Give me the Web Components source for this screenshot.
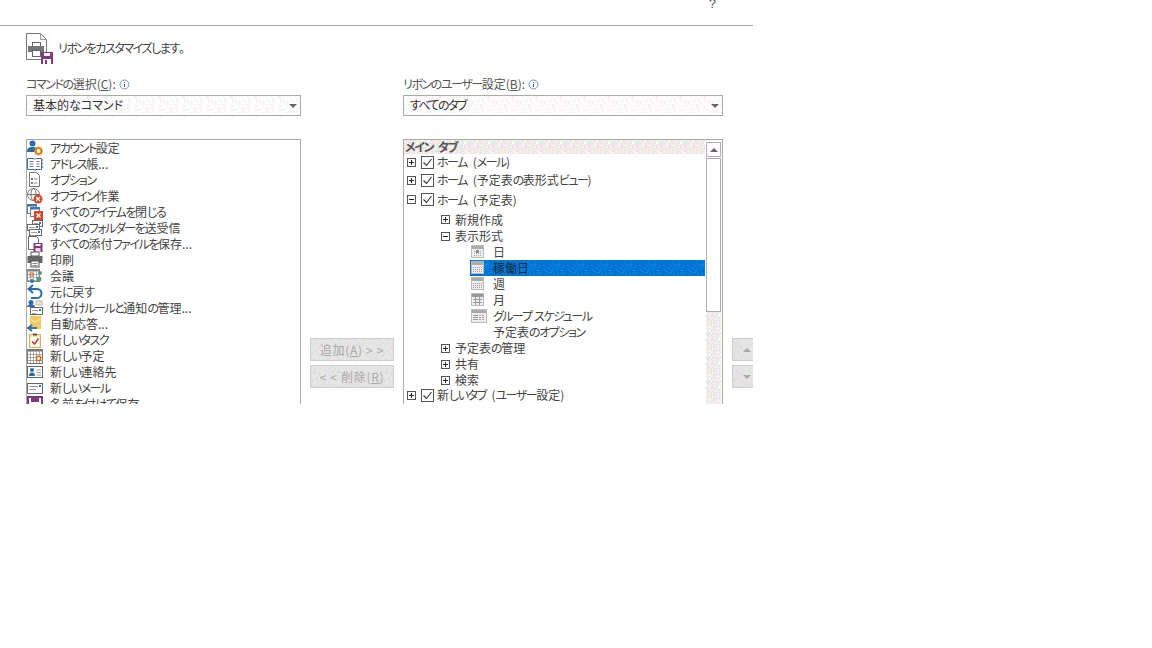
<!DOCTYPE html>
<html lang="ja"><head><meta charset="utf-8"><title>リボンのカスタマイズ</title>
<style>
html,body{margin:0;background:#fff}
body{font:12px/16px "Noto Sans CJK JP","Noto Sans",sans-serif;color:#444;font-feature-settings:"palt"}
</style></head><body>
<x-dialog>
  <x-caption slot="caption"></x-caption>
  <x-heading slot="heading">リボンをカスタマイズします。</x-heading>

  <x-field slot="left" style="--w:275px" value="基本的なコマンド" ls="0"><span>コマンドの選択(<u>C</u>):</span></x-field>
  <x-list slot="left" style="--w:275px">
    <x-cmd icon="account">アカウント設定</x-cmd>
    <x-cmd icon="book">アドレス帳...</x-cmd>
    <x-cmd icon="option">オプション</x-cmd>
    <x-cmd icon="offline">オフライン作業</x-cmd>
    <x-cmd icon="closeall">すべてのアイテムを閉じる</x-cmd>
    <x-cmd icon="sendall">すべてのフォルダーを送受信</x-cmd>
    <x-cmd icon="saveatt">すべての添付ファイルを保存...</x-cmd>
    <x-cmd icon="print">印刷</x-cmd>
    <x-cmd icon="meeting">会議</x-cmd>
    <x-cmd icon="undo">元に戻す</x-cmd>
    <x-cmd icon="rules">仕分けルールと通知の管理...</x-cmd>
    <x-cmd icon="auto">自動応答...</x-cmd>
    <x-cmd icon="task">新しいタスク</x-cmd>
    <x-cmd icon="appt">新しい予定</x-cmd>
    <x-cmd icon="contact">新しい連絡先</x-cmd>
    <x-cmd icon="mail">新しいメール</x-cmd>
    <x-cmd icon="saveas">名前を付けて保存</x-cmd>
  </x-list>

  <x-btn slot="mid" style="--w:84px">追加(<u>A</u>) &gt; &gt;</x-btn>
  <x-btn slot="mid" style="--w:84px">&lt; &lt; 削除(<u>R</u>)</x-btn>

  <x-field slot="right" style="--w:320px" value="すべてのタブ" ls="-1.6"><span>リボンのユーザー設定(<u>B</u>):</span></x-field>
  <x-tree slot="right" style="--w:320px" title-text="メイン タブ">
    <x-node kind="top" state="plus" h="16">ホーム (メール)</x-node>
    <x-node kind="top" state="plus" h="20">ホーム (予定表の表形式ビュー)</x-node>
    <x-node kind="top" state="minus" h="19">ホーム (予定表)</x-node>
    <x-node kind="group" state="plus" h="19" style="padding-top:2px;box-sizing:border-box">新規作成</x-node>
    <x-node kind="group" state="minus">表示形式</x-node>
    <x-node kind="leaf" icon="day">日</x-node>
    <x-node kind="leaf" icon="work" selected>稼働日</x-node>
    <x-node kind="leaf" icon="week">週</x-node>
    <x-node kind="leaf" icon="month">月</x-node>
    <x-node kind="leaf" icon="group">グループ スケジュール</x-node>
    <x-node kind="leaf">予定表のオプション</x-node>
    <x-node kind="group" state="plus">予定表の管理</x-node>
    <x-node kind="group" state="plus">共有</x-node>
    <x-node kind="group" state="plus">検索</x-node>
    <x-node kind="top" state="plus" style="margin-top:-1px">新しいタブ (ユーザー設定)</x-node>
  </x-tree>

  <x-btn slot="side" style="--w:21px" arrow="up"></x-btn>
  <x-btn slot="side" style="--w:21px" arrow="down"></x-btn>
</x-dialog>

<script>
/* Narrow kana runs to the compact width of the original UI font */
const KANA=/[\u3040-\u30ff]+/g;
const narrowHTML=(s,ls=-1.45)=>s.replace(KANA,m=>`<span style="letter-spacing:${ls}px">${m}</span>`);
function narrowLight(root){
  const w=document.createTreeWalker(root,NodeFilter.SHOW_TEXT);const list=[];
  while(w.nextNode())if(w.currentNode.nodeValue.trim())list.push(w.currentNode);
  for(const t of list){const tpl=document.createElement('template');
    tpl.innerHTML=narrowHTML(t.nodeValue.replace(/&/g,'&amp;').replace(/</g,'&lt;'));t.replaceWith(tpl.content);}
}
narrowLight(document.querySelector('x-dialog'));

/* Dither tiles: pixel noise drawn as an SVG pattern, no raster image */
function tile(colors,n,seedIn){let s='',seed=seedIn||12345;
  const rnd=()=>{seed^=seed<<13;seed^=seed>>>17;seed^=seed<<5;seed>>>=0;return seed;};
  for(let y=0;y<n;y++)for(let x=0;x<n;x++){
    s+=`<rect x='${x}' y='${y}' width='1' height='1' fill='${colors[rnd()%colors.length]}'/>`;}
  return `url("data:image/svg+xml,${encodeURIComponent(`<svg xmlns='http://www.w3.org/2000/svg' width='${n}' height='${n}' shape-rendering='crispEdges'>${s}</svg>`)}")`;}
const TRACK=tile(['#f8dcea','#f8dcea','#dff3e4','#f6f5d6','#dfeaf7','#ffffff','#eadff3','#f3efe6'],24);
const BTN=tile(['#e6d5e6','#d9e8de','#e8e8d4','#d8e1ec','#e8e8e8','#e2e2e2','#efe6ec'],24,777);
const BOX=tile(['#fff','#fff','#fff','#fdf0f6','#fff','#f0f9f2','#fff','#fbe9f2','#fff','#f3f9f3'],24,4242);
const SEL=tile(['#0078d7','#0078d7','#0069c4','#0a86e6','#0078d7','#0070cc'],24,99);
const dither=`background:${TRACK};`;
const btnDither=`background:${BTN};`;

const doc='<path d="M2.5.5h7l3 3v11h-10z" fill="#fff" stroke="#777"/>';
const floppy=(x,y)=>`<g transform="translate(${x},${y})"><rect width="9" height="9" fill="#80397b"/><rect x="2" y="1" width="5" height="2" fill="#fff"/><rect x="2" y="5" width="5" height="4" fill="#e8d8e8"/></g>`;
const envelope=(x,y,w,h)=>`<rect x="${x+.5}" y="${y+.5}" width="${w}" height="${h}" fill="#fff" stroke="#666"/><path d="M${x+2} ${y+3.5}h${w-6}M${x+2} ${y+6.5}h${w-8}" stroke="#999"/><rect x="${x+w-3}" y="${y+2}" width="2" height="2" fill="#2b79b8"/>`;
const redx=(cx,cy)=>`<circle cx="${cx}" cy="${cy}" r="4.5" fill="#d24726"/><path d="M${cx-2} ${cy-2}l4 4m0-4l-4 4" stroke="#fff" stroke-width="1.2"/>`;
const calGrid=(x,y,w,h,c)=>{let s=`<rect x="${x+.5}" y="${y+.5}" width="${w}" height="${h}" fill="#fff" stroke="${c}"/><rect x="${x}" y="${y}" width="${w+1}" height="2.5" fill="${c}"/>`;for(let i=x+3.5;i<x+w;i+=3)s+=`<path d="M${i} ${y+2}v${h-2}" stroke="${c}" stroke-opacity=".6"/>`;for(let j=y+5.5;j<y+h;j+=3)s+=`<path d="M${x} ${j}h${w}" stroke="${c}" stroke-opacity=".6"/>`;return s;};
const ICONS={
account:'<circle cx="5.5" cy="3.5" r="3" fill="#2b6ca8"/><path d="M0 12c0-4 2-5 5.500-5s4 1 4 2v3z" fill="#2b6ca8"/><circle cx="11.500" cy="11" r="3" fill="none" stroke="#e8811a" stroke-width="2.200"/><path d="M11.500 6.500v2M11.500 13.500v2M7 11h2M14 11h2M8.500 8l1.500 1.500M13 12.500l1.500 1.500M14.500 8L13 9.500M10 12.500L8.500 14" stroke="#e8811a" stroke-width="1.300"/>',
book:'<path d="M.5 2.500h6.500l1 1 1-1h5.500v11h-6l-.5 1-.5-1H.5z" fill="#fff" stroke="#3b6f9e"/><path d="M2.500 5.500h4M2.500 8h4M2.500 10.500h4M9.500 5.500h3M9.500 8h3M9.500 10.500h3" stroke="#777"/><path d="M15 3v2" stroke="#d2691e" stroke-width="1.500"/><path d="M15 6.500v2" stroke="#2b79b8" stroke-width="1.500"/><path d="M15 10v2" stroke="#4a8a4a" stroke-width="1.500"/>',
option:doc+'<rect x="4.500" y="6.500" width="1" height="1" stroke="#777"/><path d="M7 7h3.500" stroke="#888"/><rect x="4.500" y="10.500" width="1" height="1" stroke="#777"/><path d="M7 11h3.500" stroke="#888"/>',
offline:'<circle cx="6.500" cy="6.500" r="6" fill="#fff" stroke="#777"/><ellipse cx="6.500" cy="6.500" rx="2.500" ry="6" fill="none" stroke="#777"/><path d="M.5 6.500h12" stroke="#777"/>'+redx(11,11),
closeall:'<rect x=".5" y=".5" width="9" height="9" fill="#fff" stroke="#777"/><rect x=".5" y=".5" width="9" height="2" fill="#2b79b8"/><rect x="3.500" y="3.500" width="9" height="9" fill="#fff" stroke="#777"/><rect x="3.500" y="3.500" width="9" height="2" fill="#2b79b8"/><rect x="7" y="7" width="9" height="9" fill="#d24726"/><path d="M9.500 9.500l4 4m0-4l-4 4" stroke="#fff" stroke-width="1.300"/>',
sendall:envelope(5,0,10,6)+envelope(0,4,12,6)+envelope(2,9,12,6),
saveatt:'<path d="M1.500.5h8l2 2v11h-10z" fill="#fff" stroke="#666"/>'+floppy(6.500,7),
print:'<rect x="4" y="0" width="8" height="4" fill="#fff" stroke="#555"/><rect x=".5" y="4" width="15" height="7" fill="#666"/><rect x="4" y="9" width="8" height="6" fill="#fff" stroke="#555"/><path d="M5.500 11.500h5M5.500 13.500h5" stroke="#888"/>',
meeting:calGrid(0,1,12,12,'#888')+'<rect x="3" y="5" width="3" height="3" fill="none" stroke="#d2691e"/><circle cx="13" cy="5" r="2" fill="#5d9a7c"/><circle cx="12" cy="11" r="2.500" fill="#5d9a7c"/><circle cx="5" cy="13" r="2" fill="#2b79b8"/>',
undo:'<path d="M6 1L1.500 5 6 9" fill="none" stroke="#2b6ca8" stroke-width="2"/><path d="M2 5h8c6 0 6 9 0 9H4" fill="none" stroke="#2b6ca8" stroke-width="2"/>',
rules:'<circle cx="4" cy="2.500" r="2.500" fill="#2b6ca8"/><path d="M0 7c0-2 2-2.500 4-2.500s4 .5 4 2.500z" fill="#2b6ca8"/><rect x="9" y="1" width="6" height="4" fill="#f0e0c0" stroke="#bbb"/>'+envelope(3,7,12,7),
auto:'<path d="M3 0h11v13H3z" fill="#f0c860"/><path d="M3 3l5 3 6-3" fill="none" stroke="#fff" stroke-opacity=".6"/><path d="M5 9L1 12l4 3" fill="none" stroke="#2b6ca8" stroke-width="1.800"/><path d="M1.500 12H10" stroke="#2b6ca8" stroke-width="1.800"/>',
task:'<rect x="2.500" y="2.500" width="11" height="13" fill="#f7e2b0" stroke="#d8b060"/><path d="M6 3.500h4V1.500H6z" fill="#555"/><rect x="3.500" y="5" width="9" height="9.500" fill="#fff"/><path d="M5 9.500l2.500 2.500L11.500 6.500" fill="none" stroke="#c8402a" stroke-width="1.700"/>',
appt:calGrid(0,1,15,14,'#777')+'<rect x="9.500" y="8.500" width="4" height="4" fill="#fff" stroke="#d2691e" stroke-width="1.400"/>',
contact:'<rect x=".5" y="2.500" width="15" height="11" fill="#fff" stroke="#666"/><circle cx="5" cy="6" r="2" fill="#2b6ca8"/><path d="M2 12c0-3 1.500-3.500 3-3.500s3 .5 3 3.500z" fill="#2b6ca8"/><path d="M9.500 6h4.500M9.500 8.500h4.500M9.500 11h4.500" stroke="#999"/>',
mail:envelope(0,3,15,10),
saveas:'<rect x="1" y="1" width="14" height="14" fill="#fff" stroke="#80397b" stroke-width="2"/><rect x="4" y="1" width="8" height="5" fill="#80397b"/>',
};
const LEAF={
day:'<rect x=".5" y=".5" width="12" height="12" fill="#eee" stroke="#bbb"/><rect x="1" y="1" width="11" height="3" fill="#aaa"/><path d="M3 6.500h7M3 8.500h7M3 10.500h7" stroke="#aaa" stroke-dasharray="1 1"/><rect x="5" y="5" width="3" height="3" fill="#888"/>',
work:'<rect x=".5" y=".5" width="12" height="12" fill="#eee" stroke="#bbb"/><rect x="1" y="1" width="11" height="3" fill="#aaa"/><path d="M2 6.500h9M2 8.500h9M2 10.500h9" stroke="#999" stroke-dasharray="1 1"/>',
week:'<rect x=".5" y=".5" width="12" height="12" fill="#eee" stroke="#bbb"/><rect x="1" y="1" width="11" height="3" fill="#aaa"/><path d="M2 6.500h9M2 8.500h9M2 10.500h9" stroke="#999" stroke-dasharray="1 1"/>',
month:'<rect x=".5" y=".5" width="12" height="12" fill="#eee" stroke="#bbb"/><rect x="1" y="1" width="11" height="3" fill="#999"/><path d="M2 6.500h9M2 9.500h9M4.500 4v8M8.500 4v8" stroke="#999"/>',
group:'<rect x=".5" y=".5" width="15" height="13" fill="#eee" stroke="#bbb"/><rect x="1" y="1" width="14" height="3" fill="#aaa"/><path d="M2 6.500h5M2 8.500h5M2 10.500h5" stroke="#999"/><path d="M8 6.500h6M8 8.500h6M8 10.500h6" stroke="#b99" stroke-dasharray="2 1"/>',
};
const def=(name,html)=>{customElements.define(name,class extends HTMLElement{
  constructor(){super();this.attachShadow({mode:'open'}).innerHTML=typeof html==='function'?html(this):html;}
});};
def('x-dialog',`<style>
:host{display:block;width:753px;height:404px;overflow:hidden}
.body{padding-left:26px;display:flex;flex-direction:column}
.cols{display:flex;padding-top:13px}
.col{display:flex;flex-direction:column}
.mid{width:84px;margin:0 9px;padding-top:262px;gap:4px}
.side{width:21px;margin-left:9px;padding-top:262px;gap:4px}
</style>
<slot name="caption"></slot>
<div class="body"><slot name="heading"></slot>
<div class="cols">
<div class="col"><slot name="left"></slot></div>
<div class="col mid"><slot name="mid"></slot></div>
<div class="col"><slot name="right"></slot></div>
<div class="col side"><slot name="side"></slot></div>
</div></div>`);
def('x-caption',`<style>
:host{display:flex;justify-content:flex-end;height:25px;border-bottom:1px solid #a5aea0;padding-right:37px}
span{font:13px/8px "Liberation Sans",sans-serif;color:#555;height:8px}
</style><span>?</span>`);
def('x-heading',`<style>
:host{display:flex;align-items:center;gap:4px;height:30px;margin-top:7px;font-size:12px;color:#444}
svg{flex:none;display:block;margin-top:1px}
</style><svg width="28" height="31" viewBox="0 0 28 31"><path d="M.5.5h14l6 6v20H.5z" fill="#fff" stroke="#777"/><path d="M14.500.5v6h6" fill="none" stroke="#999"/><rect x="6.500" y="9.500" width="8" height="4" fill="#fff" stroke="#666"/><rect x="2" y="13" width="16" height="6" fill="#777"/><rect x="6.500" y="17.500" width="8" height="6" fill="#fff" stroke="#666"/><g transform="translate(15,19)"><rect width="12" height="12" fill="#80397b"/><rect x="3" y="1" width="6" height="3" fill="#fff"/><rect x="2" y="7" width="8" height="5" fill="#fff"/><rect x="4" y="8" width="2" height="4" fill="#80397b"/></g></svg><span><slot></slot></span>`);
def('x-field',h=>`<style>
:host{display:block;width:var(--w)}
.lab{display:flex;align-items:center;gap:3px;height:16px;color:#555;font-size:12px}
svg{display:block}
::slotted(span){white-space:nowrap}
.box{box-sizing:border-box;height:21px;margin-top:3px;border:1px solid #a3ada0;display:flex;align-items:center;justify-content:space-between;padding:0 3px 0 6px;color:#333;background:${BOX}}
.box span{margin-top:-1px}
i{width:0;height:0;border:4px solid transparent;border-top:4px solid #666;border-bottom:0}
</style><div class="lab"><slot></slot><svg width="11" height="11" viewBox="0 0 11 11"><circle cx="5.500" cy="5.500" r="4.500" fill="#fff" stroke="#6f93c4"/><path d="M5.500 3v1M5.500 5v3" stroke="#556"/></svg></div>
<div class="box"><span>${narrowHTML(h.getAttribute('value'),h.getAttribute('ls'))}</span><i></i></div>`);
def('x-list',`<style>
:host{display:block;box-sizing:border-box;width:var(--w);height:400px;margin-top:23px;border:1px solid #a3ada0}
</style><slot></slot>`);
def('x-cmd',h=>`<style>
:host{display:flex;align-items:center;gap:7px;height:16px;white-space:nowrap;color:#444}
svg{flex:none;display:block;overflow:visible}
</style><svg width="16" height="16" viewBox="0 0 16 16">${ICONS[h.getAttribute('icon')]||''}</svg><span><slot></slot></span>`);
def('x-btn',h=>{const a=h.getAttribute('arrow');return `<style>
:host{display:flex;box-sizing:border-box;width:var(--w);height:23px;border:1px solid #cfcdcf;align-items:center;justify-content:center;white-space:nowrap;color:#a8a8a8;letter-spacing:.7px;${btnDither}}
i{width:0;height:0;border:4px solid transparent;margin-left:7px}
.up{border-bottom:4px solid #a8a8a8;border-top:0}.down{border-top:4px solid #a8a8a8;border-bottom:0}
:host([arrow]){border-right:0}
</style>${a?`<i class="${a}"></i>`:'<slot></slot>'}`;});
def('x-tree',h=>`<style>
:host{display:flex;box-sizing:border-box;width:var(--w);height:400px;margin-top:23px;border:1px solid #a3ada0}
.main{width:301px;flex:none}
.head{height:14px;line-height:14px;padding-left:1px;font-weight:700;color:#555;word-spacing:2px;${dither}}
.bar{width:15px;margin-left:1px;flex:none;display:flex;flex-direction:column;padding-top:2px}
.btn{height:15px;box-sizing:border-box;border:1px solid #b9a9b9;display:flex;align-items:center;justify-content:center}
.btn i{width:0;height:0;border:4px solid transparent;border-bottom:4px solid #666;border-top:0}
.thumb{height:154px;box-sizing:border-box;border:1px solid #b0a9b4;margin-top:1px}
.track{flex:1;${dither}}
</style><div class="main"><div class="head">${narrowHTML(h.getAttribute('title-text'))}</div><slot></slot></div>
<div class="bar"><div class="btn"><i></i></div><div class="thumb"></div><div class="track"></div></div>`);
def('x-node',h=>{
const kind=h.getAttribute('kind'),st=h.getAttribute('state'),ic=h.getAttribute('icon'),ht=h.getAttribute('h')||16;
const exp=st?`<svg class="exp" width="9" height="9" viewBox="0 0 9 9"><rect x=".5" y=".5" width="8" height="8" fill="#fff" stroke="#555"/><path d="M2 4.500h5${st==='plus'?'M4.500 2v5':''}" stroke="#222"/></svg>`:'';
const chk=kind==='top'?`<svg class="chk" width="13" height="13" viewBox="0 0 13 13"><rect x=".5" y=".5" width="12" height="12" fill="#fff" stroke="#555"/><path d="M2.500 6.500l3 3 5-6.500" fill="none" stroke="#333" stroke-width="1.100"/></svg>`:'';
const pad={top:3,group:37,leaf:66}[kind];
let inner;
if(kind==='leaf'){
 inner=`<div class="leaf${h.hasAttribute('selected')?' sel':''}"><span class="ic">${ic?`<svg width="16" height="14" viewBox="0 0 16 14">${LEAF[ic]}</svg>`:''}</span><span><slot></slot></span></div>`;
}else inner=`${exp}${chk}<span class="t"><slot></slot></span>`;
return `<style>
:host{display:flex;align-items:center;height:${ht}px;padding-left:${pad}px;white-space:nowrap;color:#444}
svg{display:block;flex:none}
.exp{margin-right:5px}
.t{margin-left:${kind==='top'?3:0}px;word-spacing:3px}
.leaf{flex:1;align-self:stretch;display:flex;align-items:center;padding-left:1px}
.ic{width:22px;flex:none}
.sel{background:${SEL};color:#1a2a3a}
</style>${inner}`;});
</script>
</body></html>
